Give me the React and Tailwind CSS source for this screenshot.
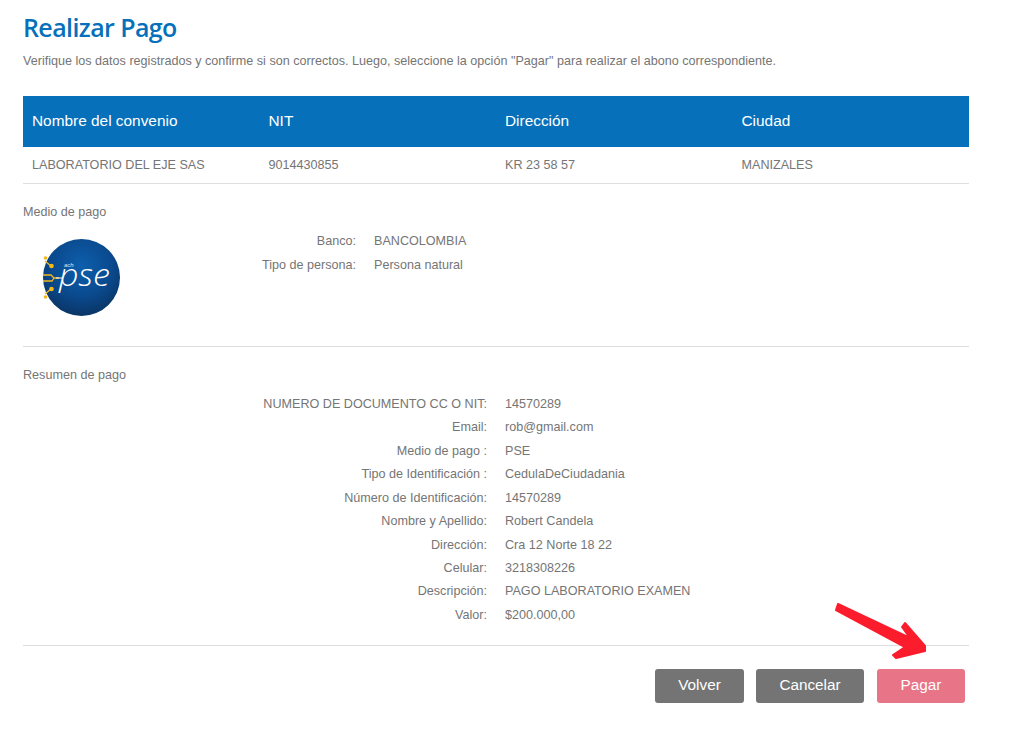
const SUMMARY = [
  ["NUMERO DE DOCUMENTO CC O NIT:", "14570289"],
  ["Email:", "rob@gmail.com"],
  ["Medio de pago :", "PSE"],
  ["Tipo de Identificación :", "CedulaDeCiudadania"],
  ["Número de Identificación:", "14570289"],
  ["Nombre y Apellido:", "Robert Candela"],
  ["Dirección:", "Cra 12 Norte 18 22"],
  ["Celular:", "3218308226"],
  ["Descripción:", "PAGO LABORATORIO EXAMEN"],
  ["Valor:", "$200.000,00"],
];

const PseLogo = () => (
  <svg width="80" height="80" viewBox="0 0 80 80" className="ml-[19px]">
    <defs>
      <radialGradient id="pse-bg" cx="50%" cy="35%" r="65%">
        <stop offset="0%" stopColor="#0d5fad" />
        <stop offset="60%" stopColor="#0a4a8e" />
        <stop offset="100%" stopColor="#0a3566" />
      </radialGradient>
    </defs>
    <circle cx="39.5" cy="39.5" r="38.5" fill="url(#pse-bg)" />
    <g stroke="#f5b81c" strokeWidth="1.3" fill="none">
      <path d="M1 37h8l3 3h5" />
      <path d="M1 43h9l2-3" />
      <path d="M3 23l6 5" />
      <path d="M3 56l6-5" />
    </g>
    <g fill="#f5b81c">
      <circle cx="9.5" cy="28" r="2.3" />
      <circle cx="9.5" cy="51" r="2.3" />
      <circle cx="3.5" cy="20" r="1.8" />
      <circle cx="3.5" cy="59" r="1.8" />
    </g>
    <path d="M14 40h7" stroke="#ffffff" strokeWidth="1" />
    <text x="22" y="29" fill="#dbe7f3" fontSize="6" fontStyle="italic" fontFamily="Liberation Sans, sans-serif">ach</text>
    <text x="17" y="48" fill="#ffffff" fontSize="32" fontWeight="300" fontStyle="italic" fontFamily="Open Sans, sans-serif" textLength="51" lengthAdjust="spacingAndGlyphs">pse</text>
  </svg>
);

const Arrow = () => (
  <svg width="110" height="70" viewBox="0 0 110 70" className="absolute left-[825px] top-[595px]" fill="#fb1c2c" stroke="#fb1c2c" strokeWidth="2" strokeLinejoin="round">
    <path d="M13 9L85 43L77 32L80 28L100 51L100 56L71 63L68 60L80 52L11 15Z" />
  </svg>
);

export default function App() {
  return (
    <div className="relative min-h-[738px] bg-white font-['Liberation_Sans',sans-serif] text-[12.6px] text-[#757575]">
      <div className="w-[969px] pl-[23px] pt-[10px]">
        <h1 className="font-['Open_Sans',sans-serif] text-[25px] leading-[34px] font-semibold tracking-[-0.6px] text-[#0670bb]">Realizar Pago</h1>
        <p className="mt-[10px] leading-[14px]">
          Verifique los datos registrados y confirme si son correctos. Luego, seleccione la opción "Pagar" para realizar el abono correspondiente.
        </p>

        <table className="mt-[28px] w-full table-fixed border-b border-[#dedede]">
          <thead>
            <tr className="h-[51px] bg-[#0670bb] text-left text-[15.4px] text-white">
              <th className="pb-[2px] pl-[9px] font-normal">Nombre del convenio</th>
              <th className="pb-[2px] pl-[9px] font-normal">NIT</th>
              <th className="pb-[2px] pl-[9px] font-normal">Dirección</th>
              <th className="pb-[2px] pl-[9px] font-normal">Ciudad</th>
            </tr>
          </thead>
          <tbody>
            <tr className="h-[36px]">
              <td className="pt-[2px] pl-[9px]">LABORATORIO DEL EJE SAS</td>
              <td className="pt-[2px] pl-[9px]">9014430855</td>
              <td className="pt-[2px] pl-[9px]">KR 23 58 57</td>
              <td className="pt-[2px] pl-[9px]">MANIZALES</td>
            </tr>
          </tbody>
        </table>

        <section className="h-[163px] border-b border-[#dedede] pt-[21px]">
          <div className="leading-[14px]">Medio de pago</div>
          <div className="flex">
            <div className="mt-[19px] w-[230px]">
              <PseLogo />
            </div>
            <div className="mt-[15px] grid grid-cols-[103px_1fr] content-start gap-x-[18px] gap-y-[10px] leading-[14px]">
              <span className="text-right">Banco:</span>
              <span>BANCOLOMBIA</span>
              <span className="text-right">Tipo de persona:</span>
              <span>Persona natural</span>
            </div>
          </div>
        </section>

        <section className="h-[299px] border-b border-[#dedede] pt-[21px]">
          <div className="leading-[14px]">Resumen de pago</div>
          <div className="mt-[15.4px] grid grid-cols-[464px_1fr] gap-x-[18px] gap-y-[9.45px] leading-[14px]">
            {SUMMARY.map(([label, value]) => (
              <div key={label} className="contents">
                <span className="text-right">{label}</span>
                <span>{value}</span>
              </div>
            ))}
          </div>
        </section>

        <div className="mt-[23px] flex justify-end gap-[12px] pr-[4px] text-[15.3px] text-white">
          <button className="h-[34px] w-[89px] rounded-[3px] bg-[#747474]">Volver</button>
          <button className="h-[34px] w-[108px] rounded-[3px] bg-[#747474]">Cancelar</button>
          <button className="ml-px h-[34px] w-[88px] rounded-[3px] bg-[#e87488]">Pagar</button>
        </div>
      </div>
      <Arrow />
    </div>
  );
}
